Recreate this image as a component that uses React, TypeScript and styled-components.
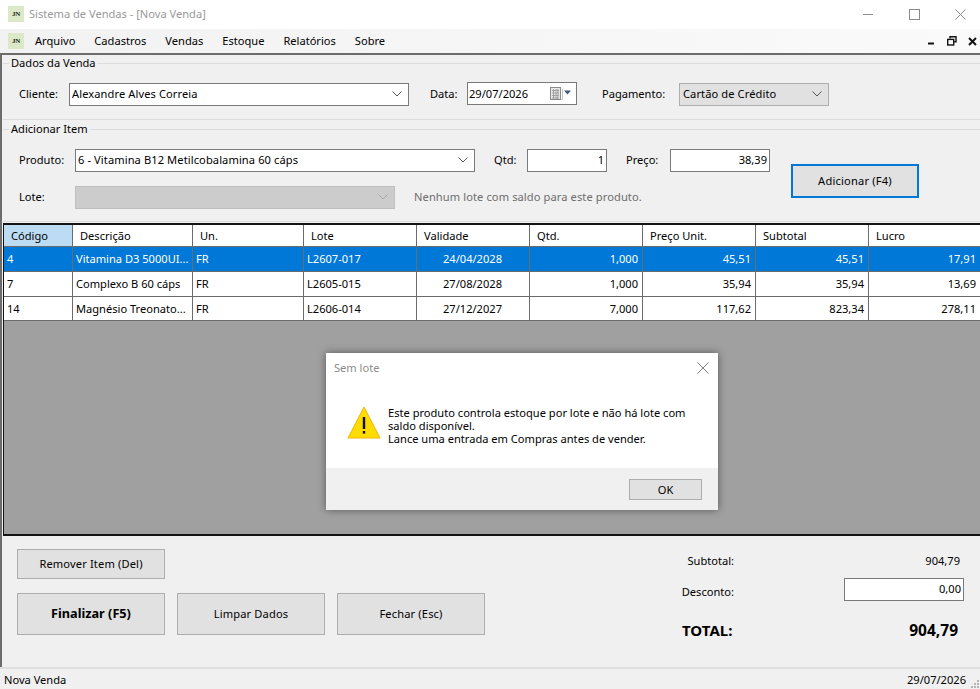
import styled, { createGlobalStyle } from "styled-components";

const GlobalStyle = createGlobalStyle`
  html, body {
    margin: 0;
    padding: 0;
    background: #f0f0f0;
  }
  * {
    box-sizing: border-box;
  }
`;

const menus = ["Arquivo", "Cadastros", "Vendas", "Estoque", "Relatórios", "Sobre"];

const columns = [
  { title: "Código", width: 69 },
  { title: "Descrição", width: 120 },
  { title: "Un.", width: 111 },
  { title: "Lote", width: 113 },
  { title: "Validade", width: 113 },
  { title: "Qtd.", width: 113 },
  { title: "Preço Unit.", width: 113 },
  { title: "Subtotal", width: 113 },
  { title: "Lucro", width: 112 },
];

const items = [
  ["4", "Vitamina D3 5000UI...", "FR", "L2607-017", "24/04/2028", "1,000", "45,51", "45,51", "17,91"],
  ["7", "Complexo B 60 cáps", "FR", "L2605-015", "27/08/2028", "1,000", "35,94", "35,94", "13,69"],
  ["14", "Magnésio Treonato...", "FR", "L2606-014", "27/12/2027", "7,000", "117,62", "823,34", "278,11"],
];

const alignFor = (index: number) => {
  if (index === 4) return "center";
  if (index > 4) return "right";
  return "left";
};

const Chevron = ({ color = "#555" }: { color?: string }) => (
  <svg width="10" height="6" viewBox="0 0 10 6" fill="none">
    <path d="M0.5 0.5 L5 5 L9.5 0.5" stroke={color} strokeWidth="1" />
  </svg>
);

const CalendarIcon = () => (
  <svg width="23" height="14" viewBox="0 0 23 14" fill="none">
    <rect x="0.5" y="0.5" width="10" height="12" fill="#e8e8e8" stroke="#8a8a8a" />
    <path d="M2 3.5h7M2 6h7M2 8.5h7M2 11h7M3.5 2v10M6 2v10M8 2v10" stroke="#a2a2a2" strokeWidth="1" />
    <path d="M11 12.5h1.5V2" stroke="#c4c4c4" />
    <path d="M14 3.5h7l-3.5 4z" fill="#40587c" />
  </svg>
);

const App = () => {
  return (
    <Page>
      <GlobalStyle />
      <TitleBar>
        <LogoBox>JN</LogoBox>
        <TitleText>Sistema de Vendas - [Nova Venda]</TitleText>
        <WindowControls>
          <svg width="11" height="11" viewBox="0 0 11 11">
            <path d="M0 5.5h10" stroke="#8a8a8a" />
          </svg>
          <svg width="11" height="11" viewBox="0 0 11 11" fill="none">
            <rect x="0.5" y="0.5" width="10" height="10" stroke="#8a8a8a" />
          </svg>
          <svg width="11" height="11" viewBox="0 0 11 11">
            <path d="M0.5 0.5l10 10M10.5 0.5l-10 10" stroke="#8a8a8a" />
          </svg>
        </WindowControls>
      </TitleBar>

      <MenuBar>
        <LogoBox>JN</LogoBox>
        <MenuList>
          {menus.map((menu) => (
            <MenuItem key={menu}>{menu}</MenuItem>
          ))}
        </MenuList>
        <MdiControls>
          <svg width="8" height="8" viewBox="0 0 8 8">
            <path d="M0 6.5h6" stroke="#111" strokeWidth="2" />
          </svg>
          <svg width="10" height="10" viewBox="0 0 10 10" fill="none">
            <path d="M3 2.5V0.8h6v5H7.2" stroke="#111" strokeWidth="1.4" />
            <rect x="0.7" y="3.4" width="6" height="5.6" stroke="#111" strokeWidth="1.4" />
          </svg>
          <svg width="9" height="9" viewBox="0 0 9 9">
            <path d="M1 1l7 7M8 1l-7 7" stroke="#111" strokeWidth="2" />
          </svg>
        </MdiControls>
      </MenuBar>

      <Workspace>
        <SaleGroup>
          <Legend>Dados da Venda</Legend>
          <FieldRow>
            <FieldLabel $width={50}>Cliente:</FieldLabel>
            <Combo $width={340}>
              <span>Alexandre Alves Correia</span>
              <Chevron />
            </Combo>
            <FieldLabel $width={37} $left={21}>
              Data:
            </FieldLabel>
            <DateBox>
              <span>29/07/2026</span>
              <CalendarIcon />
            </DateBox>
            <FieldLabel $width={77} $left={25}>
              Pagamento:
            </FieldLabel>
            <Combo $width={150} $flat>
              <span>Cartão de Crédito</span>
              <Chevron />
            </Combo>
          </FieldRow>
        </SaleGroup>

        <ItemGroup>
          <Legend>Adicionar Item</Legend>
          <ItemBody>
            <ItemFields>
              <FieldRow>
                <FieldLabel $width={56}>Produto:</FieldLabel>
                <Combo $width={400}>
                  <span>6 - Vitamina B12 Metilcobalamina 60 cáps</span>
                  <Chevron />
                </Combo>
                <FieldLabel $width={33} $left={19}>
                  Qtd:
                </FieldLabel>
                <NumberBox $width={80}>1</NumberBox>
                <FieldLabel $width={44} $left={19}>
                  Preço:
                </FieldLabel>
                <NumberBox $width={100}>38,39</NumberBox>
              </FieldRow>
              <FieldRow>
                <FieldLabel $width={56}>Lote:</FieldLabel>
                <DisabledCombo>
                  <Chevron color="#a8a8a8" />
                </DisabledCombo>
                <Hint>Nenhum lote com saldo para este produto.</Hint>
              </FieldRow>
            </ItemFields>
            <AddButton>Adicionar (F4)</AddButton>
          </ItemBody>
        </ItemGroup>

        <GridArea>
          <GridRow $header>
            {columns.map((column, index) => (
              <HeaderCell key={column.title} $width={column.width} $active={index === 0}>
                {column.title}
              </HeaderCell>
            ))}
          </GridRow>
          {items.map((row, rowIndex) => (
            <GridRow key={row[0]} $selected={rowIndex === 0} $short={rowIndex === 2}>
              {row.map((value, index) => (
                <DataCell key={index} $width={columns[index].width} $align={alignFor(index)}>
                  {value}
                </DataCell>
              ))}
            </GridRow>
          ))}
        </GridArea>

        <Footer>
          <ButtonColumn>
            <ActionButton $height={30}>Remover Item (Del)</ActionButton>
            <ButtonRow>
              <ActionButton $height={42} $bold>
                Finalizar (F5)
              </ActionButton>
              <ActionButton $height={42}>Limpar Dados</ActionButton>
              <ActionButton $height={42}>Fechar (Esc)</ActionButton>
            </ButtonRow>
          </ButtonColumn>
          <Totals>
            <TotalLabel>Subtotal:</TotalLabel>
            <TotalValue>904,79</TotalValue>
            <DiscountLabel>Desconto:</DiscountLabel>
            <NumberBox $width={120} $raised>
              0,00
            </NumberBox>
            <GrandLabel>TOTAL:</GrandLabel>
            <GrandValue>904,79</GrandValue>
          </Totals>
        </Footer>
      </Workspace>

      <StatusBar>
        <span>Nova Venda</span>
        <StatusDate>29/07/2026</StatusDate>
        <Grip>
          <svg width="10" height="10" viewBox="0 0 10 10" fill="#b5b5b5">
            <rect x="7" y="1" width="2" height="2" />
            <rect x="4" y="4" width="2" height="2" />
            <rect x="7" y="4" width="2" height="2" />
            <rect x="1" y="7" width="2" height="2" />
            <rect x="4" y="7" width="2" height="2" />
            <rect x="7" y="7" width="2" height="2" />
          </svg>
        </Grip>
      </StatusBar>

      <Dialog>
        <DialogTitle>
          <span>Sem lote</span>
          <svg width="12" height="12" viewBox="0 0 12 12">
            <path d="M0.5 0.5l11 11M11.5 0.5l-11 11" stroke="#808080" />
          </svg>
        </DialogTitle>
        <DialogBody>
          <svg width="34" height="33" viewBox="0 0 34 33">
            <path d="M17 1 L33 32 H1 Z" fill="#ffdc00" stroke="#f2b705" strokeWidth="1" strokeLinejoin="round" />
            <rect x="15.8" y="11" width="2.4" height="12" fill="#111" />
            <rect x="15.8" y="25" width="2.4" height="2.6" fill="#111" />
          </svg>
          <DialogText>
            Este produto controla estoque por lote e não há lote com saldo disponível.
            <br />
            Lance uma entrada em Compras antes de vender.
          </DialogText>
        </DialogBody>
        <DialogFooter>
          <DialogButton>OK</DialogButton>
        </DialogFooter>
      </Dialog>
    </Page>
  );
};

const Page = styled.div`
  position: relative;
  width: 980px;
  height: 689px;
  overflow: hidden;
  display: flex;
  flex-direction: column;
  background: #f0f0f0;
  color: #000;
  font-family: "Noto Sans", "Liberation Sans", sans-serif;
  font-size: 11.1px;
`;

const TitleBar = styled.div`
  height: 29px;
  flex: none;
  display: flex;
  align-items: center;
  padding: 0 14px 1px 8px;
  background: #fff;
`;

const LogoBox = styled.div`
  width: 16px;
  height: 16px;
  flex: none;
  display: flex;
  align-items: center;
  justify-content: center;
  background: #dce9c9;
  color: #1c2a16;
  font-family: "Liberation Serif", serif;
  font-size: 7px;
  font-weight: 700;
  letter-spacing: -0.3px;
`;

const TitleText = styled.span`
  margin: 0 0 2px 5px;
  color: #9a9a9a;
`;

const WindowControls = styled.div`
  margin-left: auto;
  display: flex;
  gap: 35px;
  align-items: center;
`;

const MenuBar = styled.div`
  height: 24px;
  flex: none;
  display: flex;
  align-items: center;
  padding: 0 3px 0 8px;
  background: linear-gradient(to right, #f2f2f2, #fafafa);
`;

const MenuList = styled.div`
  display: flex;
  gap: 19px;
  margin-left: 11px;
  padding-bottom: 2px;
`;

const MenuItem = styled.span`
  color: #000;
`;

const MdiControls = styled.div`
  margin-left: auto;
  display: flex;
  gap: 11px;
  align-items: center;
`;

const Workspace = styled.div`
  flex: 1;
  min-height: 0;
  display: flex;
  flex-direction: column;
  border-top: 2px solid #6c6c6c;
  border-left: 2px solid #6c6c6c;
  padding-left: 1px;
`;

const SaleGroup = styled.section`
  height: 65px;
  flex: none;
  border-bottom: 1px solid #dcdcdc;
`;

const ItemGroup = styled.section`
  height: 102px;
  flex: none;
  padding-top: 1px;
  border-bottom: 1px solid #dcdcdc;
`;

const Legend = styled.div`
  height: 16px;
  display: flex;
  align-items: center;
  gap: 2px;
  padding-bottom: 2px;

  &::before {
    content: "";
    width: 6px;
    height: 1px;
    margin-top: 2px;
    background: #dcdcdc;
  }

  &::after {
    content: "";
    flex: 1;
    height: 1px;
    margin-top: 2px;
    background: #dcdcdc;
  }
`;

const FieldRow = styled.div`
  display: flex;
  align-items: center;
  height: 23px;
  margin-top: 12px;
  padding-left: 16px;
`;

const ItemBody = styled.div`
  display: flex;
  align-items: flex-start;
`;

const ItemFields = styled.div`
  display: flex;
  flex-direction: column;
  width: 770px;
  & > ${FieldRow} + ${FieldRow} {
    margin-top: 14px;
  }
`;

const FieldLabel = styled.span<{ $width: number; $left?: number }>`
  width: ${(p) => p.$width}px;
  margin-left: ${(p) => p.$left ?? 0}px;
  margin-bottom: 2px;
  flex: none;
`;

const Combo = styled.div<{ $width: number; $flat?: boolean }>`
  width: ${(p) => p.$width}px;
  height: 23px;
  flex: none;
  display: flex;
  align-items: center;
  justify-content: space-between;
  padding: 0 6px 2px ${(p) => (p.$flat ? 3 : 2)}px;
  letter-spacing: 0.1px;
  background: ${(p) => (p.$flat ? "#e1e1e1" : "#fff")};
  border: 1px solid ${(p) => (p.$flat ? "#adadad" : "#7a7a7a")};
`;

const DisabledCombo = styled.div`
  width: 320px;
  height: 23px;
  flex: none;
  display: flex;
  align-items: center;
  justify-content: flex-end;
  padding: 0 6px 2px 0;
  background: #cccccc;
  border: 1px solid #bfbfbf;
`;

const DateBox = styled.div`
  width: 110px;
  height: 23px;
  flex: none;
  margin-top: -2px;
  display: flex;
  align-items: center;
  justify-content: space-between;
  padding: 0 3px 0 1px;
  background: #fff;
  border: 1px solid #7a7a7a;
`;

const NumberBox = styled.div<{ $width: number; $raised?: boolean }>`
  width: ${(p) => p.$width}px;
  height: 23px;
  flex: none;
  display: flex;
  align-items: center;
  justify-content: flex-end;
  padding: 0 2px ${(p) => (p.$raised ? 3 : 2)}px 0;
  background: #fff;
  border: 1px solid #7a7a7a;
`;

const Hint = styled.span`
  margin: 0 0 2px 19px;
  color: #6d6d6d;
  letter-spacing: 0.1px;
`;

const AddButton = styled.div`
  width: 128px;
  height: 34px;
  flex: none;
  margin: 27px 0 0 18px;
  display: flex;
  align-items: center;
  justify-content: center;
  padding-bottom: 2px;
  letter-spacing: 0.2px;
  background: #e1e1e1;
  border: 2px solid #0078d7;
`;

const GridArea = styled.div`
  height: 313px;
  flex: none;
  margin-top: 1px;
  background: #a0a0a0;
  border-top: 2px solid #141414;
  border-left: 1px solid #141414;
  border-bottom: 2px solid #141414;
`;

const GridRow = styled.div<{ $header?: boolean; $selected?: boolean; $short?: boolean }>`
  display: flex;
  height: ${(p) => (p.$header ? 22 : p.$short ? 24 : 25)}px;
  background: ${(p) => (p.$selected ? "#0078d7" : "#fff")};
  color: ${(p) => (p.$selected ? "#fff" : "#000")};
  border-bottom: 1px solid #6b6b6b;
`;

const HeaderCell = styled.div<{ $width: number; $active?: boolean }>`
  width: ${(p) => p.$width}px;
  flex: none;
  display: flex;
  align-items: center;
  padding-left: 7px;
  background: ${(p) => (p.$active ? "#bcdcf4" : "transparent")};
  border-right: 1px solid #6b6b6b;
`;

const DataCell = styled.div<{ $width: number; $align: string }>`
  width: ${(p) => p.$width}px;
  flex: none;
  display: flex;
  align-items: center;
  justify-content: ${(p) =>
    p.$align === "right" ? "flex-end" : p.$align === "center" ? "center" : "flex-start"};
  padding: 0 4px 1px 3px;
  white-space: nowrap;
  border-right: 1px solid #6b6b6b;
`;

const Footer = styled.div`
  flex: 1;
  min-height: 0;
  display: flex;
  justify-content: space-between;
  padding: 13px 16px 0 14px;
`;

const ButtonColumn = styled.div`
  display: flex;
  flex-direction: column;
  gap: 14px;
  width: 468px;
`;

const ButtonRow = styled.div`
  display: flex;
  gap: 12px;
`;

const ActionButton = styled.div<{ $height: number; $bold?: boolean }>`
  width: 148px;
  height: ${(p) => p.$height}px;
  flex: none;
  display: flex;
  align-items: center;
  justify-content: center;
  padding-bottom: 2px;
  letter-spacing: ${(p) => (p.$bold ? 0 : 0.15)}px;
  background: #e1e1e1;
  border: 1px solid #adadad;
  font-weight: ${(p) => (p.$bold ? 700 : 400)};
  font-size: ${(p) => (p.$bold ? "12.7px" : "inherit")};
`;

const Totals = styled.div`
  display: grid;
  grid-template-columns: 94px 120px;
  grid-template-rows: 20px 23px 26px;
  column-gap: 110px;
  row-gap: 7px;
  padding-top: 2px;
  align-items: center;
`;

const TotalLabel = styled.span`
  text-align: right;
  margin-bottom: 2px;
`;

const DiscountLabel = styled(TotalLabel)`
  margin: 4px 0 0;
`;

const TotalValue = styled.span`
  text-align: right;
  padding-right: 4px;
  margin-bottom: 2px;
`;

const GrandLabel = styled.span`
  margin-top: 18px;
  margin-left: 42px;
  font-size: 15px;
  font-weight: 700;
`;

const GrandValue = styled.span`
  margin-top: 18px;
  padding-right: 6px;
  text-align: right;
  font-size: 15.5px;
  font-weight: 700;
`;

const StatusBar = styled.div`
  height: 22px;
  flex: none;
  display: flex;
  align-items: center;
  padding: 0 0 0 4px;
  background: #f0f0f0;
  border-top: 2px solid #dfdfdf;
`;

const StatusDate = styled.span`
  margin-left: auto;
  margin-right: 4px;
`;

const Grip = styled.div`
  width: 10px;
  height: 10px;
  display: flex;
  align-self: flex-end;
`;

const Dialog = styled.div`
  position: absolute;
  left: 326px;
  top: 353px;
  width: 392px;
  height: 157px;
  display: flex;
  flex-direction: column;
  background: #fff;
  box-shadow: 0 0 8px rgba(0, 0, 0, 0.45);
`;

const DialogTitle = styled.div`
  height: 29px;
  flex: none;
  display: flex;
  align-items: center;
  justify-content: space-between;
  padding: 0 9px 0 8px;
  color: #8c8c8c;
`;

const DialogBody = styled.div`
  flex: 1;
  display: flex;
  align-items: flex-start;
  padding: 24px 0 0 21px;
`;

const DialogText = styled.div`
  width: 310px;
  margin-left: 7px;
  line-height: 13px;
`;

const DialogFooter = styled.div`
  height: 42px;
  flex: none;
  display: flex;
  align-items: center;
  justify-content: flex-end;
  padding-right: 16px;
  background: #f0f0f0;
`;

const DialogButton = styled.div`
  width: 73px;
  height: 21px;
  display: flex;
  align-items: center;
  justify-content: center;
  background: #e1e1e1;
  border: 1px solid #adadad;
`;

export default App;
